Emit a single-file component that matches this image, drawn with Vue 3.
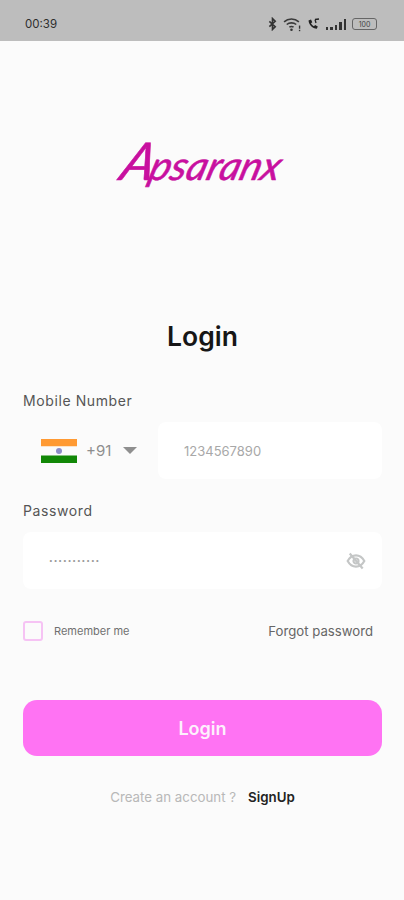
<template>
  <div class="screen">
    <div class="status-bar">
      <span class="time">00:39</span>
      <div class="status-icons">
        <svg width="9" height="14" viewBox="0 0 10 14"><path d="M1.500 4 8 10 5 13V1l3 3-6.500 6" fill="none" stroke="#333" stroke-width="1.800"/></svg>
        <svg width="18" height="15" viewBox="0 0 17 14"><g fill="none" stroke="#3a3a3a" stroke-width="1.500"><path d="M1 4.500c4-3.500 10-3.500 14 0"/><path d="M3.500 7c2.500-2 6.500-2 9 0"/><path d="M6 9.500c1.200-.8 2.800-.8 4 0"/></g><circle cx="8" cy="12" r="1.200" fill="#333"/><rect x="15" y="8" width="1.300" height="3" fill="#333"/><rect x="15" y="12" width="1.300" height="1.300" fill="#333"/></svg>
        <svg width="13" height="13" viewBox="0 0 13 13"><path d="M1.500 2.500 4 1.500l1.300 2.700-1.300 1c.7 1.400 1.700 2.300 3 3l1.100-1.200 2.700 1.400-1 2.400C5.500 10.500 2 7 1.500 2.500Z" fill="#222"/><path d="M8 1.500 12 1M8 1.500 9 5" stroke="#222" stroke-width="1.300" fill="none"/></svg>
        <div class="signal">
          <i style="height: 3px"></i>
          <i style="height: 3px"></i>
          <i style="height: 5px"></i>
          <i style="height: 8px"></i>
          <i style="height: 11px"></i>
        </div>
        <div class="battery"><span>100</span></div>
      </div>
    </div>

    <div class="content">
      <div class="logo"><span class="logo-cap">A</span>psaranx</div>
      <h1 class="title">Login</h1>

      <label class="field-label">Mobile Number</label>
      <div class="phone-row">
        <div class="country">
          <svg class="flag" width="36" height="24" viewBox="0 0 36 24">
            <rect width="36" height="7.500" fill="#ff9a33"/>
            <rect y="7.500" width="36" height="9" fill="#fbfbfb"/>
            <rect y="16.500" width="36" height="7.500" fill="#128807"/>
            <circle cx="18" cy="12" r="3" fill="#8d8dc8"/>
          </svg>
          <span class="code">+91</span>
          <span class="caret"></span>
        </div>
        <div class="input phone-input">1234567890</div>
      </div>

      <label class="field-label password-label">Password</label>
      <div class="input password-input">
        <span class="dots">•••••••••••</span>
        <svg width="20" height="20" viewBox="0 0 24 24" fill="none" stroke="#c4c6c6" stroke-width="2.600">
          <path d="M2 12c2.500-4.500 6-6.800 10-6.800s7.500 2.300 10 6.800c-2.500 4.500-6 6.800-10 6.800S4.500 16.500 2 12Z"/>
          <circle cx="12" cy="12" r="3"/>
          <path d="M4.500 3 20 21"/>
        </svg>
      </div>

      <div class="options">
        <div class="remember">
          <span class="checkbox"></span>
          <span>Remember me</span>
        </div>
        <span class="forgot">Forgot password</span>
      </div>

      <button class="login-btn">Login</button>

      <div class="signup">
        <span class="muted">Create an account ?</span>
        <span class="link">SignUp</span>
      </div>
    </div>
  </div>
</template>

<script setup>
</script>

<style>
html, body {
  margin: 0;
  background: #fbfbfb;
}
</style>

<style scoped>
.screen {
  width: 404px;
  height: 900px;
  overflow: hidden;
  background: #fbfbfb;
  font-family: Inter, "Noto Sans", sans-serif;
  color: #555;
}

.status-bar {
  height: 41px;
  box-sizing: border-box;
  padding: 7px 27px 0 25px;
  display: flex;
  align-items: center;
  justify-content: space-between;
  background: #bdbdbd;
}

.time {
  font-size: 11.500px;
  color: #2e2e2e;
}

.status-icons {
  display: flex;
  align-items: center;
  gap: 6px;
}

.signal {
  display: flex;
  align-items: flex-end;
  gap: 2px;
  height: 11px;
}

.signal i {
  width: 2.500px;
  background: #333;
}

.battery {
  width: 25px;
  height: 12px;
  box-sizing: border-box;
  border: 1px solid #666;
  border-radius: 3px;
  display: flex;
  align-items: center;
  justify-content: center;
}

.battery span {
  font-size: 7px;
  color: #444;
}

.content {
  padding: 0 22px 0 23px;
  display: flex;
  flex-direction: column;
}

.logo {
  margin-top: 86px;
  height: 66px;
  text-align: center;
  font-family: Lato, "Liberation Sans", sans-serif;
  font-style: italic;
  font-size: 40px;
  line-height: 66px;
  color: #c8109f;
  transform: translateX(1px) skewX(-16deg);
  -webkit-text-stroke: 0.6px #c8109f;
}

.logo-cap {
  font-size: 52px;
  margin-right: -4px;
}

.title {
  margin: 126px 0 0;
  text-align: center;
  font-size: 26.500px;
  line-height: 34px;
  font-weight: 600;
  color: #161616;
}

.field-label {
  margin-top: 39px;
  font-size: 14px;
  line-height: 18px;
  letter-spacing: 0.600px;
  color: #555;
}

.password-label {
  margin-top: 23px;
}

.phone-row {
  margin-top: 12px;
  display: flex;
  align-items: center;
}

.country {
  width: 135px;
  padding-left: 18px;
  box-sizing: border-box;
  display: flex;
  align-items: center;
}

.flag {
  display: block;
}

.code {
  margin-left: 9px;
  font-size: 15px;
  color: #8e8e8e;
}

.caret {
  margin-left: 12px;
  width: 0;
  height: 0;
  border-left: 7px solid transparent;
  border-right: 7px solid transparent;
  border-top: 7px solid #8f8f8f;
}

.input {
  height: 57px;
  box-sizing: border-box;
  background: #fff;
  border-radius: 8px;
  display: flex;
  align-items: center;
  font-size: 13px;
  color: #a8a8a8;
}

.phone-input {
  flex: 1;
  padding-left: 26px;
}

.password-input {
  margin-top: 12px;
  padding: 0 16px 0 26px;
  justify-content: space-between;
}

.dots {
  font-size: 6.500px;
  letter-spacing: 1px;
  color: #9a9a9a;
}

.options {
  margin-top: 32px;
  display: flex;
  align-items: center;
  justify-content: space-between;
  padding-right: 9px;
}

.remember {
  display: flex;
  align-items: center;
  gap: 11px;
  font-size: 11px;
  color: #707070;
}

.checkbox {
  width: 20px;
  height: 20px;
  box-sizing: border-box;
  border: 2px solid #f6c3f4;
  border-radius: 3px;
}

.forgot {
  font-size: 13.200px;
  color: #666;
}

.login-btn {
  margin-top: 59px;
  height: 56px;
  border: none;
  border-radius: 14px;
  background: #ff73f3;
  color: #fdf0fc;
  font-family: inherit;
  font-size: 18px;
  font-weight: 600;
}

.signup {
  margin-top: 32px;
  display: flex;
  justify-content: center;
  gap: 12px;
  font-size: 13.300px;
  line-height: 18px;
}

.muted {
  color: #b8b8b8;
}

.link {
  font-weight: 600;
  color: #222;
}
</style>
